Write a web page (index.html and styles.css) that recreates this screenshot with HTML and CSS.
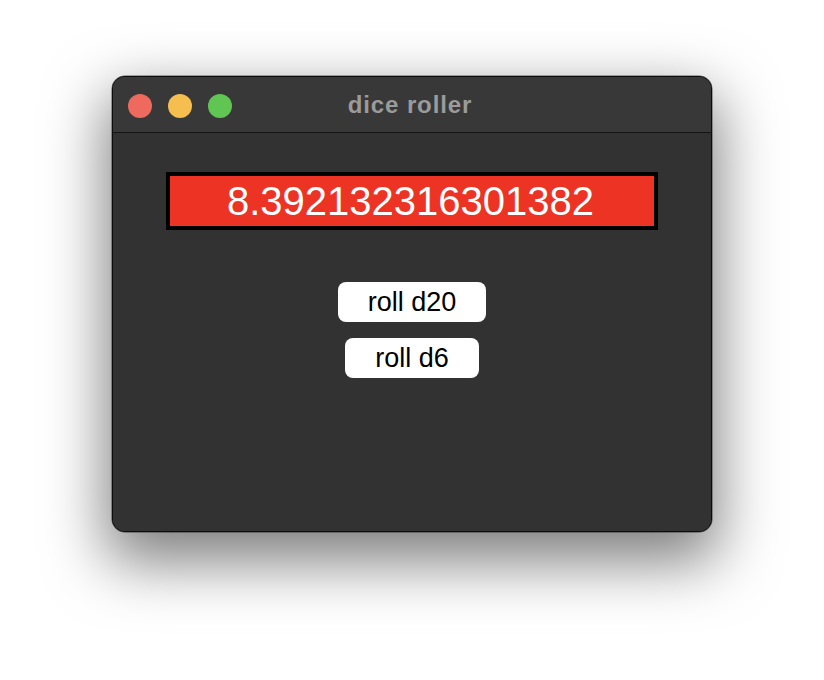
FILE: index.html
```html
<!DOCTYPE html>
<html>
<head>
<meta charset="utf-8">
<link rel="stylesheet" href="styles.css">
</head>
<body>
<div class="desktop">
  <div class="window">
    <div class="titlebar">
      <div class="lights">
        <span class="light red"></span>
        <span class="light yellow"></span>
        <span class="light green"></span>
      </div>
      <div class="title">dice roller</div>
    </div>
    <div class="content">
      <div class="result">8.392132316301382</div>
      <div class="buttons">
        <button class="btn">roll d20</button>
        <button class="btn">roll d6</button>
      </div>
    </div>
  </div>
</div>
</body>
</html>
```
FILE: styles.css
```css
html, body {
  margin: 0;
  padding: 0;
  background: #ffffff;
}
body {
  width: 824px;
  height: 680px;
  overflow: hidden;
  font-family: "Liberation Sans", Arial, sans-serif;
}
.desktop {
  padding: 76px 0 0 112px;
}
.window {
  width: 600px;
  height: 456px;
  box-sizing: border-box;
  border-radius: 13px;
  background: #323232;
  border: 1px solid #0c0c0c;
  box-shadow: inset 0 0 0 1px rgba(255,255,255,0.16), 0 24px 60px 6px rgba(0,0,0,0.5), 0 0 0 0.5px rgba(0,0,0,0.6);
  overflow: hidden;
  display: flex;
  flex-direction: column;
}
.titlebar {
  height: 55px;
  background: #383838;
  border-bottom: 1px solid #141414;
  display: flex;
  align-items: center;
  position: relative;
  flex-shrink: 0;
}
.lights {
  display: flex;
  gap: 16px;
  padding-left: 15px;
  padding-top: 2px;
}
.light {
  width: 24px;
  height: 24px;
  border-radius: 50%;
  display: block;
}
.red { background: #ee6a5e; }
.yellow { background: #f5be4f; }
.green { background: #61c554; }
.title {
  position: absolute;
  left: 0;
  right: 0;
  top: 0;
  bottom: 0;
  display: flex;
  align-items: center;
  justify-content: center;
  padding-right: 4px;
  padding-top: 1px;
  font-weight: bold;
  font-size: 24px;
  letter-spacing: 0.9px;
  color: #9b9b9b;
}
.content {
  flex: 1;
  display: flex;
  flex-direction: column;
  align-items: center;
  padding-top: 39px;
  background: #323232;
}
.result {
  width: 492px;
  height: 58px;
  box-sizing: border-box;
  border: 4px solid #000;
  background: #ec3324;
  color: #ffffff;
  font-size: 40px;
  line-height: 50px;
  text-align: center;
  padding-right: 3px;
}
.buttons {
  margin-top: 52px;
  display: flex;
  flex-direction: column;
  align-items: center;
  gap: 16px;
}
.btn {
  height: 40px;
  border: none;
  border-radius: 8px;
  background: #ffffff;
  color: #000;
  font-family: "Liberation Sans", Arial, sans-serif;
  font-size: 27px;
  padding: 0 30px;
  line-height: 40px;
  margin: 0;
}
```
